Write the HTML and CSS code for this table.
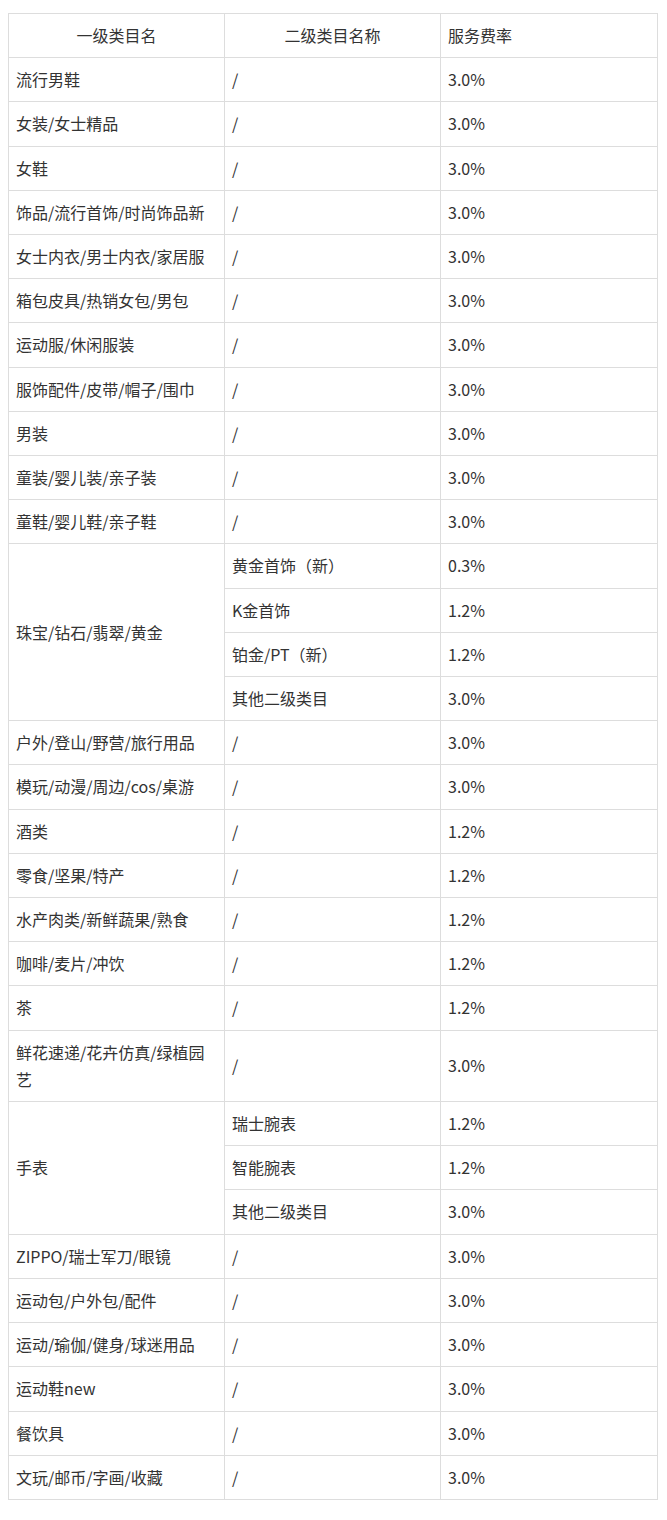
FILE: index.html
```html
<!DOCTYPE html>
<html lang="zh-CN">
<head>
<meta charset="utf-8">
<title>类目服务费率</title>
<link rel="stylesheet" href="styles.css">
</head>
<body>
<table class="rates">
  <colgroup>
    <col class="c1"><col class="c2"><col class="c3">
  </colgroup>
  <thead>
    <tr><th class="center">一级类目名</th><th class="center">二级类目名称</th><th>服务费率</th></tr>
  </thead>
  <tbody>
    <tr><td>流行男鞋</td><td>/</td><td>3.0%</td></tr>
    <tr><td>女装/女士精品</td><td>/</td><td>3.0%</td></tr>
    <tr><td>女鞋</td><td>/</td><td>3.0%</td></tr>
    <tr><td>饰品/流行首饰/时尚饰品新</td><td>/</td><td>3.0%</td></tr>
    <tr><td>女士内衣/男士内衣/家居服</td><td>/</td><td>3.0%</td></tr>
    <tr><td>箱包皮具/热销女包/男包</td><td>/</td><td>3.0%</td></tr>
    <tr><td>运动服/休闲服装</td><td>/</td><td>3.0%</td></tr>
    <tr><td>服饰配件/皮带/帽子/围巾</td><td>/</td><td>3.0%</td></tr>
    <tr><td>男装</td><td>/</td><td>3.0%</td></tr>
    <tr><td>童装/婴儿装/亲子装</td><td>/</td><td>3.0%</td></tr>
    <tr><td>童鞋/婴儿鞋/亲子鞋</td><td>/</td><td>3.0%</td></tr>
    <tr><td rowspan="4">珠宝/钻石/翡翠/黄金</td><td>黄金首饰（新）</td><td>0.3%</td></tr>
    <tr><td>K金首饰</td><td>1.2%</td></tr>
    <tr><td>铂金/PT（新）</td><td>1.2%</td></tr>
    <tr><td>其他二级类目</td><td>3.0%</td></tr>
    <tr><td>户外/登山/野营/旅行用品</td><td>/</td><td>3.0%</td></tr>
    <tr><td>模玩/动漫/周边/cos/桌游</td><td>/</td><td>3.0%</td></tr>
    <tr><td>酒类</td><td>/</td><td>1.2%</td></tr>
    <tr><td>零食/坚果/特产</td><td>/</td><td>1.2%</td></tr>
    <tr><td>水产肉类/新鲜蔬果/熟食</td><td>/</td><td>1.2%</td></tr>
    <tr><td>咖啡/麦片/冲饮</td><td>/</td><td>1.2%</td></tr>
    <tr><td>茶</td><td>/</td><td>1.2%</td></tr>
    <tr><td>鲜花速递/花卉仿真/绿植园<br>艺</td><td>/</td><td>3.0%</td></tr>
    <tr><td rowspan="3">手表</td><td>瑞士腕表</td><td>1.2%</td></tr>
    <tr><td>智能腕表</td><td>1.2%</td></tr>
    <tr><td>其他二级类目</td><td>3.0%</td></tr>
    <tr><td>ZIPPO/瑞士军刀/眼镜</td><td>/</td><td>3.0%</td></tr>
    <tr><td>运动包/户外包/配件</td><td>/</td><td>3.0%</td></tr>
    <tr><td>运动/瑜伽/健身/球迷用品</td><td>/</td><td>3.0%</td></tr>
    <tr><td>运动鞋new</td><td>/</td><td>3.0%</td></tr>
    <tr><td>餐饮具</td><td>/</td><td>3.0%</td></tr>
    <tr><td>文玩/邮币/字画/收藏</td><td>/</td><td>3.0%</td></tr>
  </tbody>
</table>
</body>
</html>
```
FILE: styles.css
```css
html, body {
  margin: 0;
  background: #ffffff;
}
body {
  padding: 13px 8px 0 8px;
  font-family: "Noto Sans CJK SC", "Noto Sans", "Liberation Sans", sans-serif;
  font-size: 16px;
  color: #333333;
}
.rates {
  width: 649px;
  border-collapse: collapse;
  table-layout: fixed;
}
.rates col.c1 { width: 216px; }
.rates col.c2 { width: 216px; }
.rates col.c3 { width: 217px; }
.rates th,
.rates td {
  border: 1px solid #dddddd;
  padding: 8px 7px;
  line-height: 27.2px;
  font-weight: normal;
  text-align: left;
  vertical-align: middle;
  word-break: break-all;
}
.rates th.center {
  text-align: center;
}
```
